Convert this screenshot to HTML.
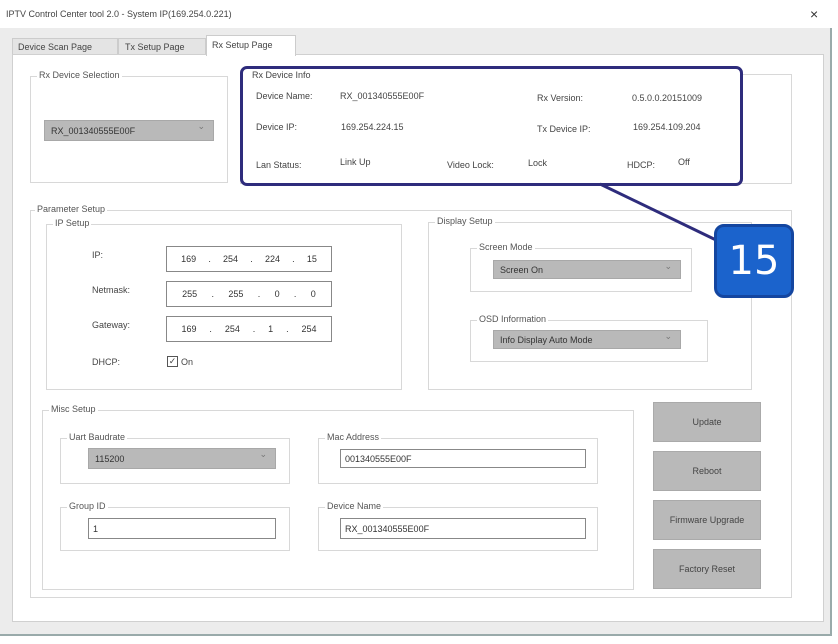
<!DOCTYPE html><html><head><style>
*{margin:0;padding:0;box-sizing:border-box}
body{width:838px;height:644px;background:#fff;font-family:"Liberation Sans",sans-serif;font-size:9px;color:#444;position:relative;overflow:hidden}
.a{position:absolute}
.g{position:absolute;border:1px solid #d8d8d8}
.gl{position:absolute;background:#fff;padding:0 2px;font-size:9px;color:#555;top:-7px;left:6px;white-space:nowrap}
.cb{position:absolute;background:#b9b9b9;border:1px solid #a8a8a8;padding-left:6px;font-size:9px;color:#333;display:flex;align-items:center}
.cb:after{content:"⌄";position:absolute;right:8px;top:0;color:#777;font-size:9px}
.in{position:absolute;border:1px solid #888;background:#fff;padding-left:4px;display:flex;align-items:center;font-size:9px;color:#333;white-space:nowrap}
.ip{justify-content:space-around;padding:0 8px}
.bt{position:absolute;left:653px;width:108px;height:40px;background:#b9b9b9;border:1px solid #aaa;display:flex;align-items:center;justify-content:center;font-size:9px;color:#444}
.t{position:absolute;white-space:nowrap}
</style></head><body>
<div class="a" style="left:0;top:28px;width:832px;height:608px;background:#ececec;border-right:2px solid #9aa;border-bottom:2px solid #9aa"></div>
<div class="t" style="left:6px;top:9px">IPTV Control Center tool 2.0 - System IP(169.254.0.221)</div>
<div class="t" style="left:810px;top:6px;font-size:14px;color:#333">×</div>
<div class="a" style="left:12px;top:38px;width:106px;height:17px;background:#e4e4e4;border:1px solid #ccc"></div>
<div class="t" style="left:18px;top:42px">Device Scan Page</div>
<div class="a" style="left:118px;top:38px;width:88px;height:17px;background:#e4e4e4;border:1px solid #ccc"></div>
<div class="t" style="left:125px;top:42px">Tx Setup Page</div>
<div class="a" style="left:12px;top:54px;width:812px;height:568px;background:#fff;border:1px solid #d0d0d0"></div>
<div class="a" style="left:206px;top:35px;width:90px;height:21px;background:#fff;border:1px solid #ccc;border-bottom:none"></div>
<div class="t" style="left:212px;top:40px">Rx Setup Page</div>

<div class="g" style="left:30px;top:76px;width:198px;height:107px"><span class="gl">Rx Device Selection</span></div>
<div class="cb" style="left:44px;top:120px;width:170px;height:21px">RX_001340555E00F</div>

<div class="g" style="left:240px;top:74px;width:552px;height:110px"></div>
<div class="a" style="left:240px;top:66px;width:503px;height:120px;border:3px solid #2e2c7c;border-radius:7px;background:#fff"></div>
<div class="t" style="left:252px;top:70px">Rx Device Info</div>
<div class="t" style="left:256px;top:91px">Device Name:</div>
<div class="t" style="left:340px;top:91px">RX_001340555E00F</div>
<div class="t" style="left:537px;top:93px">Rx Version:</div>
<div class="t" style="left:632px;top:93px">0.5.0.0.20151009</div>
<div class="t" style="left:256px;top:122px">Device IP:</div>
<div class="t" style="left:341px;top:122px">169.254.224.15</div>
<div class="t" style="left:537px;top:124px">Tx Device IP:</div>
<div class="t" style="left:633px;top:122px">169.254.109.204</div>
<div class="t" style="left:256px;top:160px">Lan Status:</div>
<div class="t" style="left:340px;top:157px">Link Up</div>
<div class="t" style="left:447px;top:160px">Video Lock:</div>
<div class="t" style="left:528px;top:158px">Lock</div>
<div class="t" style="left:627px;top:160px">HDCP:</div>
<div class="t" style="left:678px;top:157px">Off</div>

<div class="g" style="left:30px;top:210px;width:762px;height:388px"><span class="gl" style="left:4px">Parameter Setup</span></div>
<div class="g" style="left:46px;top:224px;width:356px;height:166px"><span class="gl">IP Setup</span></div>
<div class="t" style="left:92px;top:250px">IP:</div>
<div class="t" style="left:92px;top:285px">Netmask:</div>
<div class="t" style="left:92px;top:320px">Gateway:</div>
<div class="t" style="left:92px;top:357px">DHCP:</div>
<div class="in ip" style="left:166px;top:246px;width:166px;height:26px"><span>169</span><span>.</span><span>254</span><span>.</span><span>224</span><span>.</span><span>15</span></div>
<div class="in ip" style="left:166px;top:281px;width:166px;height:26px"><span>255</span><span>.</span><span>255</span><span>.</span><span>0</span><span>.</span><span>0</span></div>
<div class="in ip" style="left:166px;top:316px;width:166px;height:26px"><span>169</span><span>.</span><span>254</span><span>.</span><span>1</span><span>.</span><span>254</span></div>
<div class="a" style="left:167px;top:356px;width:11px;height:11px;border:1px solid #555;font-size:9px;line-height:9px;text-align:center">✓</div>
<div class="t" style="left:181px;top:357px">On</div>

<div class="g" style="left:428px;top:222px;width:324px;height:168px"><span class="gl">Display Setup</span></div>
<div class="g" style="left:470px;top:248px;width:222px;height:44px"><span class="gl">Screen Mode</span></div>
<div class="cb" style="left:493px;top:260px;width:188px;height:19px">Screen On</div>
<div class="g" style="left:470px;top:320px;width:238px;height:42px"><span class="gl">OSD Information</span></div>
<div class="cb" style="left:493px;top:330px;width:188px;height:19px">Info Display Auto Mode</div>

<div class="g" style="left:42px;top:410px;width:592px;height:180px"><span class="gl">Misc Setup</span></div>
<div class="g" style="left:60px;top:438px;width:230px;height:46px"><span class="gl">Uart Baudrate</span></div>
<div class="cb" style="left:88px;top:448px;width:188px;height:21px">115200</div>
<div class="g" style="left:318px;top:438px;width:280px;height:46px"><span class="gl">Mac Address</span></div>
<div class="in" style="left:340px;top:449px;width:246px;height:19px">001340555E00F</div>
<div class="g" style="left:60px;top:507px;width:230px;height:44px"><span class="gl">Group ID</span></div>
<div class="in" style="left:88px;top:518px;width:188px;height:21px">1</div>
<div class="g" style="left:318px;top:507px;width:280px;height:44px"><span class="gl">Device Name</span></div>
<div class="in" style="left:340px;top:518px;width:246px;height:21px">RX_001340555E00F</div>

<div class="bt" style="top:402px">Update</div>
<div class="bt" style="top:451px">Reboot</div>
<div class="bt" style="top:500px">Firmware Upgrade</div>
<div class="bt" style="top:549px">Factory Reset</div>

<svg class="a" style="left:0;top:0" width="838" height="644"><line x1="600" y1="184" x2="716" y2="240" stroke="#2e2c7c" stroke-width="3"/></svg>
<div class="a" style="left:714px;top:224px;width:80px;height:74px;background:#1b63cc;border:3px solid #1446a0;border-radius:10px;color:#fff;font-size:40px;display:flex;align-items:center;justify-content:center;font-family:'DejaVu Sans',sans-serif">15</div>
</body></html>
